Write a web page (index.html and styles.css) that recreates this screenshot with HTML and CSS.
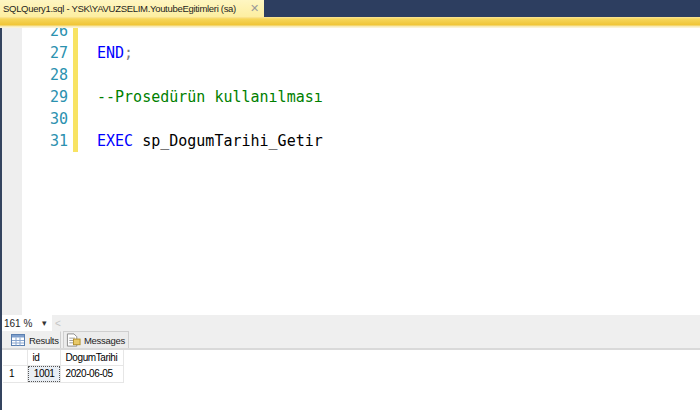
FILE: index.html
```html
<!DOCTYPE html>
<html lang="tr">
<head>
    <meta charset="UTF-8">
    <title>SQLQuery1.sql</title>
    <link rel="stylesheet" href="styles.css">
</head>
<body>
<div class="window">
    <div class="doc_tabs">
        <div class="doc_tab">
            <span class="doc_title">SQLQuery1.sql - YSK\YAVUZSELIM.YoutubeEgitimleri (sa)</span>
            <span class="doc_close">✕</span>
        </div>
    </div>
    <div class="doc_strip"></div>

    <div class="editor">
        <div class="gutter"></div>
        <div class="lines">
            <div class="scroller">
                <div class="line"><span class="num">26</span><span class="mark"></span><span class="code"></span></div>
                <div class="line"><span class="num">27</span><span class="mark"></span><span class="code"><span class="kw">END</span><span class="punct">;</span></span></div>
                <div class="line"><span class="num">28</span><span class="mark"></span><span class="code"></span></div>
                <div class="line"><span class="num">29</span><span class="mark"></span><span class="code"><span class="comment">--Prosedürün kullanılması</span></span></div>
                <div class="line"><span class="num">30</span><span class="mark"></span><span class="code"></span></div>
                <div class="line"><span class="num">31</span><span class="mark"></span><span class="code"><span class="kw">EXEC</span> sp_DogumTarihi_Getir</span></div>
            </div>
        </div>
    </div>

    <div class="zoom_bar">
        <div class="zoom_box"><span>161 %</span><span class="zoom_arrow">▾</span></div>
        <span class="scroll_left">&lt;</span>
    </div>

    <div class="result_tabs">
        <div class="rtab active">
            <svg class="icon" width="14" height="12" viewBox="0 0 14 12">
                <rect x="0.5" y="0.5" width="13" height="11" fill="#ffffff" stroke="#5a7fb0"/>
                <rect x="1" y="1" width="12" height="2.5" fill="#7f9fcc"/>
                <path d="M1 6.5H13M1 9H13M5 3.5V11.5M9 3.5V11.5" stroke="#8aa6cf" stroke-width="1"/>
            </svg>
            <span>Results</span>
        </div>
        <div class="rtab">
            <svg class="icon" width="15" height="14" viewBox="0 0 16 14">
                <path d="M1.5 0.5H8.5L11.5 3.5V13.5H1.5Z" fill="#ffffff" stroke="#8a8a8a"/>
                <path d="M3.5 5H9.5M3.5 7.5H9.5M3.5 10H8" stroke="#9a9a9a"/>
                <rect x="8" y="6" width="7" height="6" fill="#e8c96a" stroke="#b38f2a"/>
            </svg>
            <span>Messages</span>
        </div>
    </div>

    <div class="results">
        <table class="grid">
            <tr class="head">
                <td class="rowhead"></td>
                <td class="c_id">id</td>
                <td class="c_date">DogumTarihi</td>
            </tr>
            <tr>
                <td class="rowhead">1</td>
                <td class="c_id num_cell"><span class="focus">1001</span></td>
                <td class="c_date">2020-06-05</td>
            </tr>
        </table>
    </div>
</div>
</body>
</html>
```

FILE: styles.css
```css
* {
    box-sizing: border-box;
}
body, html {
    margin: 0;
    padding: 0;
    width: 700px;
    height: 410px;
    overflow: hidden;
    background-color: #ffffff;
}
.window {
    display: flex;
    flex-direction: column;
    height: 410px;
    border-left: 2px solid #34445f;
}
.doc_tabs {
    height: 17px;
    margin-left: -2px;
    background-color: #2d3e60;
    display: flex;
}
.doc_tab {
    width: 264px;
    height: 17px;
    background: linear-gradient(#fef6c2, #fdeea0);
    display: flex;
    align-items: center;
    justify-content: space-between;
    padding: 0 5px 0 3px;
    font-family: "Liberation Sans", Arial, sans-serif;
    font-size: 9.5px;
    letter-spacing: -0.3px;
    color: #1e1e1e;
    white-space: nowrap;
}
.doc_close {
    color: #9a9a9a;
    font-size: 11px;
    letter-spacing: 0;
}
.doc_strip {
    height: 11px;
    margin-left: -2px;
    background: linear-gradient(#fbe69a 0px, #f6d65a 2px, #f0c537 8px, #f7e7a8 9px, #fbf6e2 11px);
}
.editor {
    height: 287px;
    display: flex;
    overflow: hidden;
}
.gutter {
    width: 20px;
    background-color: #eeeeee;
}
.lines {
    flex: 1;
    overflow: hidden;
}
.scroller {
    margin-top: -8px;
}
.line {
    display: flex;
    height: 22px;
    align-items: center;
    font-family: "DejaVu Sans Mono", "Liberation Mono", monospace;
    font-size: 15px;
}
.num {
    width: 46px;
    text-align: right;
    color: #2b91af;
}
.mark {
    width: 5px;
    height: 22px;
    margin-left: 5px;
    background-color: #f8e363;
}
.code {
    margin-left: 19px;
    color: #000000;
    white-space: pre;
}
.kw {
    color: #0000ff;
}
.punct {
    color: #808080;
}
.comment {
    color: #008000;
}
.zoom_bar {
    height: 16px;
    background-color: #efefef;
    display: flex;
    align-items: center;
    font-family: "Liberation Sans", Arial, sans-serif;
    font-size: 10px;
}
.zoom_box {
    width: 50px;
    height: 16px;
    background-color: #ffffff;
    display: flex;
    align-items: center;
    justify-content: space-between;
    padding: 0 5px 0 2px;
    color: #1e1e1e;
}
.zoom_arrow {
    font-size: 9px;
    color: #333333;
}
.scroll_left {
    margin-left: 3px;
    color: #c4c4c4;
    font-size: 10px;
}
.result_tabs {
    height: 19px;
    background-color: #efefef;
    border-bottom: 2px solid #d9d9d9;
    display: flex;
    align-items: flex-end;
    padding-left: 3px;
    gap: 2px;
    font-family: "Liberation Sans", Arial, sans-serif;
    font-size: 9.5px;
    letter-spacing: -0.3px;
    color: #1e1e1e;
}
.rtab {
    height: 17px;
    display: flex;
    align-items: center;
    gap: 3px;
    padding: 0 3px 0 2px;
    border: 1px solid #cfcfcf;
    border-bottom: none;
    background-color: #ececec;
    white-space: nowrap;
}
.rtab.active {
    width: 56px;
    border-color: transparent #cfcfcf transparent transparent;
    background-color: #efefef;
    padding-left: 5px;
    gap: 4px;
}
.icon {
    flex-shrink: 0;
}
.results {
    flex: 1;
    background-color: #ffffff;
    padding-left: 1px;
}
.grid {
    table-layout: fixed;
    width: 120px;
    border-collapse: collapse;
    font-family: "Liberation Sans", Arial, sans-serif;
    font-size: 10px;
    letter-spacing: -0.4px;
    color: #000000;
}
.grid td {
    height: 16px;
    padding: 0 3px;
    border: 1px solid #e6e6e6;
    white-space: nowrap;
    overflow: visible;
}
.grid .head td {
    height: 15px;
    border-top: none;
}
.rowhead {
    width: 24px;
    padding-left: 6px !important;
    border-left: none !important;
}
.c_id {
    width: 33px;
    padding-left: 5px !important;
}
.c_date {
    width: 63px;
    padding-left: 5px !important;
}
.num_cell {
    text-align: right;
    padding: 0 !important;
}
.focus {
    display: block;
    height: 16px;
    line-height: 14px;
    padding-right: 4px;
    background-color: #e9eef4;
    border: 1px dotted #555555;
}
```
